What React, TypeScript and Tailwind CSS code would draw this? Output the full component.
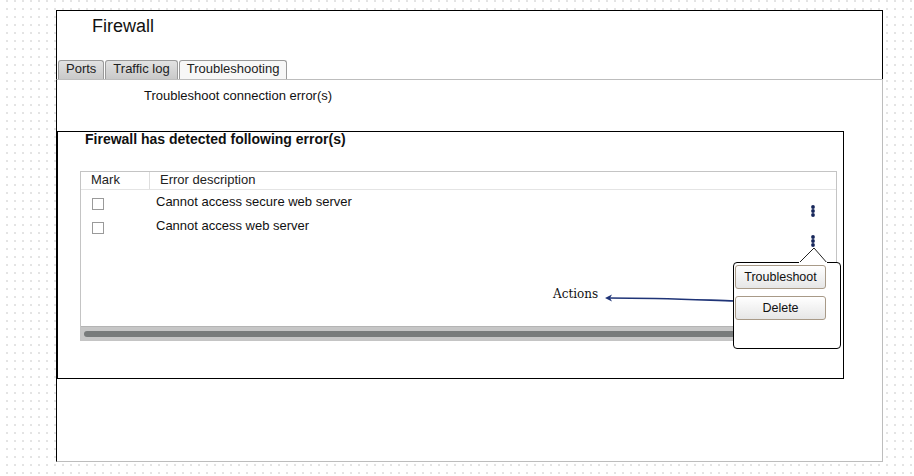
import React from "react";

const sans = "font-['Liberation_Sans',Arial,sans-serif]";

const Kebab = () => (
    <svg width="6" height="12" viewBox="0 0 6 12">
        <circle cx="3" cy="2" r="1.9" fill="#16265a" />
        <circle cx="3" cy="6" r="1.9" fill="#16265a" />
        <circle cx="3" cy="10" r="1.9" fill="#16265a" />
    </svg>
);

const Tab = ({ label, active }: { label: string; active?: boolean }) => (
    <div
        className={
            "h-[19px] px-[7px] border border-[#9a9a9a] border-b-0 rounded-t-[3px] text-[13px] leading-[15px] text-[#222] " +
            (active ? "bg-[#f7f7f7]" : "bg-gradient-to-b from-[#e2e2e2] to-[#c9c9c9]")
        }
    >
        {label}
    </div>
);

const ErrorRow = ({ text }: { text: string }) => (
    <div className="h-[24px] flex items-center">
        <div className="w-[75px] flex pl-[11px]">
            <div className="w-[12px] h-[12px] mt-[4px] border border-[#9a9a9a] bg-white"></div>
        </div>
        <div className="text-[13px] leading-[15px] pb-[2px] text-[#111]">{text}</div>
    </div>
);

const ActionButton = ({ label }: { label: string }) => (
    <div className="w-[91px] h-[24px] flex items-center justify-center rounded-[3px] border border-[#a89a88] bg-gradient-to-b from-[#ffffff] to-[#e6e6e6] text-[12.5px] text-[#111]">
        {label}
    </div>
);

export default function App() {
    return (
        <div
            className={
                "w-full h-[476px] bg-white bg-[radial-gradient(#e2e2e2_0.7px,transparent_0.8px)] bg-[size:8px_8px] bg-[position:3px_5px] pt-[10px] pl-[56px] " +
                sans
            }
        >
            <div className="w-[827px] flex flex-col">
                <div className="h-[69px] border-t border-l border-r border-black bg-white flex flex-col justify-between">
                    <div className="pl-[35px] pt-[4px] text-[18px] leading-[22px] text-[#111]">Firewall</div>
                    <div className="flex gap-[1px] pl-[1px]">
                        <Tab label="Ports" />
                        <Tab label="Traffic log" />
                        <Tab label="Troubleshooting" active />
                    </div>
                </div>
                <div className="h-[383px] border border-[#bdbdbd] border-l-black bg-white flex flex-col">
                    <div className="pl-[87px] pt-[8px] text-[13px] leading-[15px] text-[#111]">
                        Troubleshoot connection error(s)
                    </div>
                    <div className="relative mt-[28px] w-[787px] h-[248px] border border-black bg-white flex flex-col">
                        <div className="pl-[27px] text-[14px] leading-[15px] font-bold text-[#111]">
                            Firewall has detected following error(s)
                        </div>
                        <div className="ml-[22px] mt-[24px] w-[757px] h-[170px] border border-[#c4c4c4] flex flex-col">
                            <div className="h-[18px] flex border-b border-[#e4e4e4] text-[13px] leading-[15px] text-[#222]">
                                <div className="w-[69px] pl-[10px] border-r border-[#dedede]">Mark</div>
                                <div className="pl-[10px]">Error description</div>
                            </div>
                            <div className="flex-1 flex">
                                <div className="flex-1 flex flex-col">
                                    <ErrorRow text="Cannot access secure web server" />
                                    <ErrorRow text="Cannot access web server" />
                                </div>
                                <div className="w-[26px] flex flex-col pt-[15px] gap-[18px]">
                                    <Kebab />
                                    <Kebab />
                                </div>
                            </div>
                            <div className="h-[14px] bg-[#c6c6c6] border-t border-[#b4b4b4] flex items-center px-[3px]">
                                <div className="w-full h-[6px] rounded-full bg-[#787b7b]"></div>
                            </div>
                        </div>

                        <div className="absolute left-[495px] top-[155px] text-[12px] leading-[14px] text-[#111] font-['DejaVu_Serif',serif]">
                            Actions
                        </div>
                        <svg className="absolute left-[544px] top-[159px]" width="134" height="16" viewBox="0 0 134 16">
                            <path d="M133 10 C 100 9, 60 7, 7 7" fill="none" stroke="#1f3477" strokeWidth="1.6" />
                            <path d="M3 7 L 10 3.5 L 8 7 L 10 10.5 Z" fill="#1f3477" />
                        </svg>

                        <svg className="absolute left-[738px] top-[114px]" width="36" height="19" viewBox="0 0 36 19">
                            <path d="M2 18 L 18 2 L 32 18" fill="white" stroke="#222" strokeWidth="1" />
                        </svg>
                        <div className="absolute left-[675px] top-[130px] w-[108px] h-[87px] rounded-[4px] border border-black bg-white flex flex-col gap-[7px] pt-[2px] pl-[1px]">
                            <ActionButton label="Troubleshoot" />
                            <ActionButton label="Delete" />
                        </div>
                        <div className="absolute left-[741px] top-[130px] w-[28px] h-[2px] bg-white"></div>
                    </div>
                </div>
            </div>
        </div>
    );
}
